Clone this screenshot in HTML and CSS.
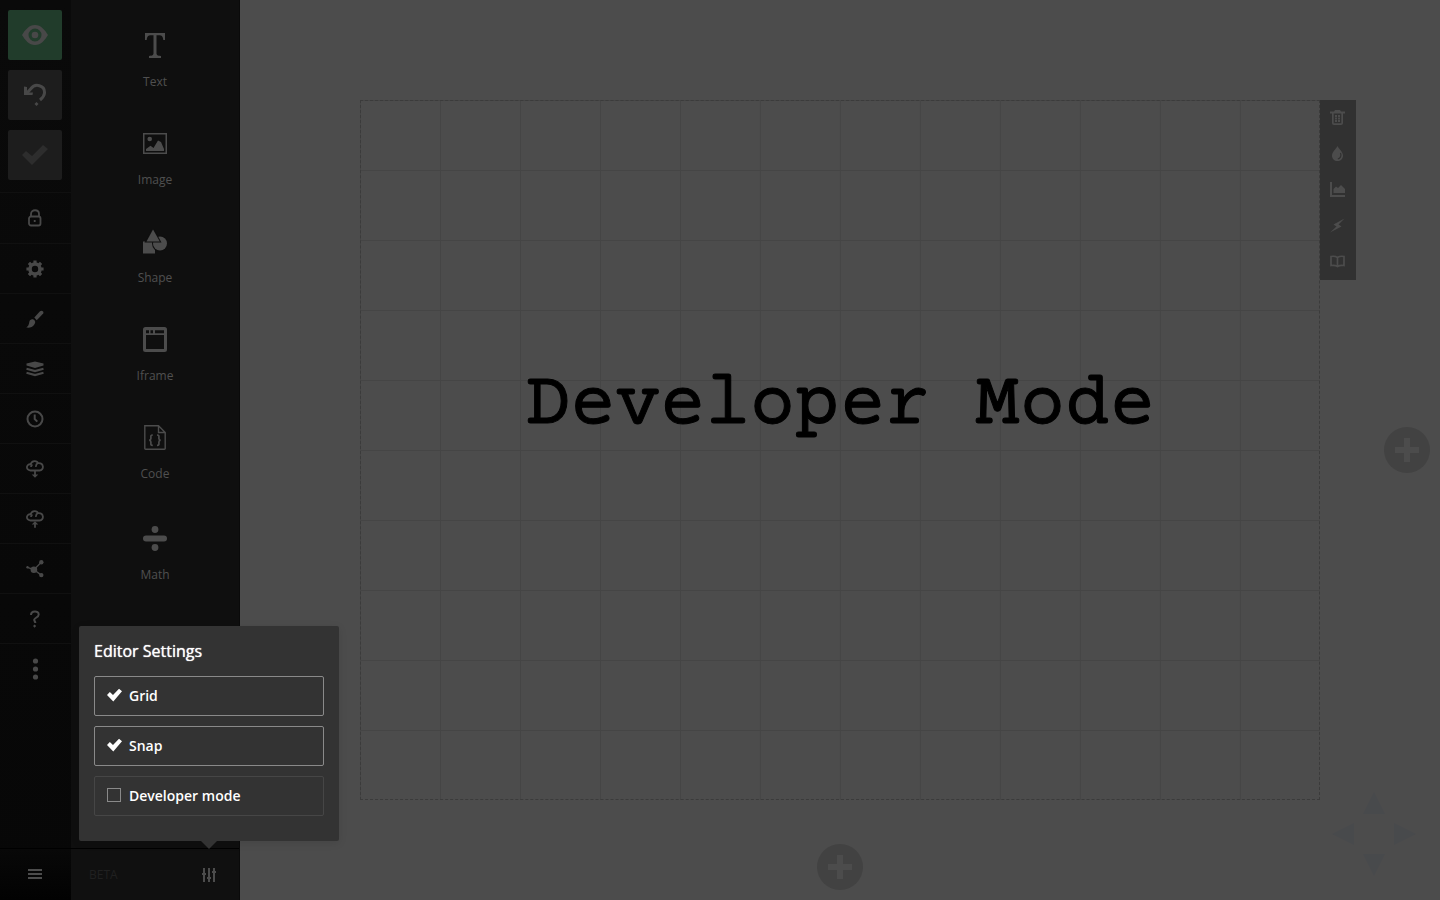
FILE: index.html
```html
<!DOCTYPE html>
<html lang="en">
<head>
<meta charset="utf-8">
<title>Slide editor</title>
<link rel="stylesheet" href="styles.css">
</head>
<body>
<div class="app">
  <nav class="rail" aria-label="Main">
    <div class="rail-actions">
      <button class="action action-preview" aria-label="Preview"><svg width="28" height="20" viewBox="0 0 28 20"><path fill-rule="evenodd" fill="currentColor" d="M1 10C4 5 8 0 14 0s10 5 13 10c-3 5-7 10-13 10S4 15 1 10zM14 3.500a6.500 6.500 0 1 0 0 13 6.500 6.500 0 0 0 0-13z"/><circle cx="14" cy="10" r="3.300" fill="currentColor"/></svg></button>
      <button class="action" aria-label="Undo"><svg width="24" height="24" viewBox="0 0 24 24"><path d="M4 10l4-4.500C12 0 22 2 21.500 10c-.2 3-2 5-4.500 7" fill="none" stroke="currentColor" stroke-width="3"/><path d="M1 3.500l3 .5v5.500h6l-.5 2.500H1z" fill="currentColor"/><path d="M13.500 19l2 2-2 2-2-2z" fill="currentColor"/></svg></button>
      <button class="action action-off" aria-label="Save"><svg width="26" height="22" viewBox="0 0 26 22"><path d="M0 11l4-4 6 5L21 1l5 4-16 16z" fill="currentColor"/></svg></button>
    </div>
    <ul class="rail-list">
      <li><button aria-label="Privacy"><svg width="18" height="18" viewBox="0 0 18 18" fill="none" stroke="currentColor" stroke-width="1.800"><rect x="3" y="7.500" width="11.500" height="9" rx="2"/><path d="M5 7V5c0-5 8-5 8 0v3"/><path d="M8.700 11v2"/></svg></button></li>
      <li><button aria-label="Settings"><svg width="18" height="18" viewBox="0 0 18 18"><circle cx="9" cy="9" r="5" fill="none" stroke="currentColor" stroke-width="3.600"/><g stroke="currentColor" stroke-width="3.200"><path d="M9 .4v3M9 14.600v3M.4 9h3M14.600 9h3M2.900 2.900L5 5M13 13l2.100 2.100M2.900 15.100L5 13M13 5l2.100-2.100"/></g></svg></button></li>
      <li><button aria-label="Style"><svg width="18" height="18" viewBox="0 0 18 18" fill="currentColor"><path d="M8.300 7.600L14 1.200c1.400-1.400 4.300 0 3.200 2.200l-6.500 6.800z"/><path d="M3.300 12c.3-2.500 2.500-3.300 4.200-2.500 2 1 2.300 3 .8 5C6.500 17.500 3.300 18 .3 17.500c1.700-1 2.700-2.800 3-5.500z"/></svg></button></li>
      <li><button aria-label="Arrange"><svg width="18" height="18" viewBox="0 0 18 18"><path d="M9 1.500l8.500 2v2L9 8 .5 5.500v-2z" fill="currentColor"/><path d="M.5 8.700L9 11l8.500-2.300M.5 12.700L9 15l8.500-2.300" fill="none" stroke="currentColor" stroke-width="2.200"/></svg></button></li>
      <li><button aria-label="History"><svg width="18" height="18" viewBox="0 0 18 18" fill="none" stroke="currentColor" stroke-width="2"><circle cx="9" cy="9" r="7.500"/><path d="M8.700 4.500V9l2.600 2.600"/></svg></button></li>
      <li><button aria-label="Import"><svg width="18" height="18" viewBox="0 0 18 18"><path d="M4.500 10.500C-1 10 .5 3.500 4.600 4.300 6 .2 11 .2 12 3.200c6-.6 6.500 7 1.500 7.300zM5 7c0-1 .6-1.800 1.500-2M10 6.800c-.2-1.800.5-3 2-3.600" fill="none" stroke="currentColor" stroke-width="1.800"/><path d="M8.100 11h1.800v3.500h2.400L9 17.800l-3.300-3.300h2.400z" fill="currentColor"/></svg></button></li>
      <li><button aria-label="Export"><svg width="18" height="18" viewBox="0 0 18 18"><path d="M4.500 10.500C-1 10 .5 3.500 4.600 4.300 6 .2 11 .2 12 3.200c6-.6 6.500 7 1.500 7.300zM5 7c0-1 .6-1.800 1.500-2M10 6.800c-.2-1.800.5-3 2-3.600" fill="none" stroke="currentColor" stroke-width="1.800"/><path d="M8.100 17.800h1.800v-3.200h2.400L9 11.300l-3.300 3.300h2.400z" fill="currentColor"/></svg></button></li>
      <li><button aria-label="Share"><svg width="18" height="18" viewBox="0 0 18 18"><g fill="currentColor"><circle cx="7.900" cy="9.700" r="3.300"/><circle cx="15.300" cy="2.300" r="2.200"/><circle cx="15.300" cy="15.100" r="2.200"/><circle cx="1.500" cy="7.300" r="1.200"/></g><path d="M1.500 7.300l6.400 2.400 7.400-7.400M8 9.700l7.300 5.400" fill="none" stroke="currentColor" stroke-width="1.400"/></svg></button></li>
      <li><button aria-label="Help"><svg width="18" height="18" viewBox="0 0 18 18"><path d="M5 5c0-4.500 7.700-4.600 7.700-.6 0 3.400-5.400 3.400-4.400 6 .3.800 1 1.300 1 2.500" fill="none" stroke="currentColor" stroke-width="2"/><path d="M8.600 14.500l1.600 1.600-1.600 1.600L7 16.100z" fill="currentColor"/></svg></button></li>
      <li><button aria-label="More"><svg width="18" height="22" viewBox="0 0 18 22" fill="currentColor"><circle cx="9.500" cy="3" r="2.600"/><circle cx="9.500" cy="11" r="2.600"/><circle cx="9.500" cy="19" r="2.600"/></svg></button></li>
    </ul>
    <button class="rail-menu" aria-label="Menu"><svg width="14" height="10" viewBox="0 0 14 10" fill="currentColor"><path d="M0 0h14v2H0zM0 4h14v2H0zM0 8h14v2H0z"/></svg></button>
  </nav>

  <aside class="panel">
    <div class="blocks">
      <button class="block"><svg width="24" height="25" viewBox="0 0 24 25"><path d="M2 0h20v7h-1.700C20 3.500 18.800 2.200 16 2.200h-2.500V20c0 2 1 2.700 4.500 3V25H6v-2c3.500-.3 4.500-1 4.500-3V2.200H8C5.200 2.200 4 3.500 3.700 7H2z" fill="currentColor"/></svg>Text</button>
      <button class="block"><svg width="24" height="25" viewBox="0 0 24 25"><rect x=".75" y="2.750" width="22.500" height="19.500" fill="none" stroke="currentColor" stroke-width="1.500"/><circle cx="6.700" cy="8" r="2.300" fill="currentColor"/><path d="M3 20v-2l4.500-3.300 3 2.300L15 9.500l3 1.500 3 7v2z" fill="currentColor"/></svg>Image</button>
      <button class="block"><svg width="24" height="25" viewBox="0 0 24 25"><rect y="12.500" width="12" height="12" fill="currentColor"/><circle cx="17" cy="14.500" r="8" fill="#0f0f0f"/><circle cx="17" cy="14.500" r="7" fill="currentColor"/><path d="M10-1.800l8.500 15.200h-17z" fill="#0f0f0f"/><path d="M10 .5l6.800 12H3.500z" fill="currentColor"/></svg>Shape</button>
      <button class="block"><svg width="24" height="25" viewBox="0 0 24 25"><path fill-rule="evenodd" fill="currentColor" d="M2.500 0h19A2.500 2.500 0 0 1 24 2.500v20a2.500 2.500 0 0 1-2.500 2.500h-19A2.500 2.500 0 0 1 0 22.500v-20A2.500 2.500 0 0 1 2.500 0zM3 3.300v3h3v-3zM7.500 3.300v3h2.500v-3zM12 3.300v3h9v-3zM3 8v14h18V8z"/></svg>Iframe</button>
      <button class="block"><svg width="24" height="25" viewBox="0 0 24 25" fill="none" stroke="currentColor" stroke-width="1.400"><path d="M2 .8h13.500l6.700 6.700v16a.8.8 0 0 1-.8.800H2.600a.8.800 0 0 1-.8-.8V.8zM15.500.8v6.700h6.700"/><path d="M9.800 10c-3 0-1.500 2-2 4-.1.800-.7 1.200-1.700 1.200 1 0 1.600.4 1.700 1.200.5 2-1 4 2 4M14 10c3 0 1.500 2 2 4 .1.800.7 1.200 1.700 1.200-1 0-1.600.4-1.700 1.200-.5 2 1 4-2 4" stroke-width="1.700"/></svg>Code</button>
      <button class="block"><svg width="24" height="28" viewBox="0 -3 24 28" fill="currentColor"><circle cx="12" cy="3.500" r="3.400"/><rect y="9.500" width="24" height="6" rx="3"/><circle cx="12" cy="21.500" r="3.400"/></svg>Math</button>
    </div>
    <footer class="panel-foot">
      <span>BETA</span>
      <button class="tune" aria-label="Editor settings"><svg width="14" height="14" viewBox="0 0 14 14" fill="currentColor"><path d="M1 0h2v14H1zM6 0h2v14H6zM11 0h2v14h-2zM0 5h4v2H0zM5 9h4v2H5zM10 3h4v2h-4z"/></svg></button>
      <section class="popover" aria-labelledby="popover-title">
        <h2 id="popover-title">Editor Settings</h2>
        <label class="option"><input type="checkbox" checked>Grid</label>
        <label class="option"><input type="checkbox" checked>Snap</label>
        <label class="option"><input type="checkbox">Developer mode</label>
      </section>
    </footer>
  </aside>

  <main class="stage">
    <section class="slide"><h1>Developer Mode</h1></section>
    <div class="side">
      <div class="slide-tools">
        <button aria-label="Delete slide"><svg width="15" height="15" viewBox="0 0 15 15"><path fill-rule="evenodd" fill="currentColor" d="M0 1.500h4L5 0h5l1 1.500h4V3.500h-2v9.500c0 1.300-.7 2-2 2H4c-1.300 0-2-.7-2-2V3.500H0zM3.700 3.500v9.700h7.600V3.500z"/><path fill="currentColor" d="M5 5h2v2H5zM8 5h2v2H8zM5 7.600h2v1.800H5zM8 7.600h2v1.800H8zM5 10h2v2H5zM8 10h2v2H8z"/></svg></button>
        <button aria-label="Background color"><svg width="15" height="15" viewBox="0 0 15 15"><path d="M7.500 0C9 3 13 6 13 9.700c0 3-2.400 5.300-5.500 5.300S2 12.700 2 9.700C2 6 6 3 7.500 0z" fill="currentColor"/><path d="M10.500 7c1.200 3-.2 5.300-2.700 6" fill="none" stroke="#313131" stroke-width="1.200"/></svg></button>
        <button aria-label="Background image"><svg width="15" height="15" viewBox="0 0 15 15" fill="currentColor"><path d="M0 0h2v13h13v2H0z"/><path d="M3.500 11V7L6 4.500l2 1.500L11 3l4 4v4z"/></svg></button>
        <button aria-label="Fragments"><svg width="15" height="15" viewBox="0 0 15 15"><path d="M14.500.5L3.500 6.500l3 2L0 14.500l11.500-6-3-2z" fill="currentColor"/></svg></button>
        <button aria-label="Speaker notes"><svg width="15" height="15" viewBox="0 0 15 15" fill="none" stroke="currentColor" stroke-width="1.700"><path d="M1 2.500c2.500-.5 5 0 6.500 1 1.500-1 4-1.500 6.500-1v9c-2.500-.4-5 0-6.500 1-1.500-1-4-1.400-6.500-1zM7.500 3.500v9"/></svg></button>
      </div>
      <button class="add" aria-label="Add slide to the right"><svg width="24" height="24" viewBox="0 0 24 24" fill="currentColor"><path d="M9 0h6v9h9v6h-9v9H9v-9H0V9h9z"/></svg></button>
    </div>
    <div class="below">
      <button class="add" aria-label="Add slide below"><svg width="24" height="24" viewBox="0 0 24 24" fill="currentColor"><path d="M9 0h6v9h9v6h-9v9H9v-9H0V9h9z"/></svg></button>
    </div>
    <svg class="arrows" width="84" height="84" viewBox="0 0 84 84" fill="currentColor" aria-hidden="true"><path d="M42 0l11 22H31zM42 84l11-22H31zM0 42l22-11v22zM84 42L62 31v22z"/></svg>
  </main>
</div>
</body>
</html>
```
FILE: styles.css
```css
* { box-sizing: border-box; }

body {
  margin: 0;
  background: #4c4c4c;
  color: #505050;
  font-family: "Open Sans", "Noto Sans", sans-serif;
  font-size: 12px;
}

button {
  display: flex;
  align-items: center;
  justify-content: center;
  margin: 0;
  padding: 0;
  border: 0;
  background: none;
  color: inherit;
  font: inherit;
}

svg { display: block; flex: none; }

.app {
  display: grid;
  grid-template-columns: 71px 169px 1fr;
  min-height: 100vh;
}

/* Icon rail */
.rail {
  display: flex;
  flex-direction: column;
  background: linear-gradient(#0a0a0a, #070707);
  color: #484848;
}

.rail-actions {
  display: flex;
  flex-direction: column;
  gap: 10px;
  padding: 10px 9px 12px 8px;
}

.action {
  height: 50px;
  border-radius: 2px;
  background: #1d1d1d;
}

.action-preview { background: #213c2b; }
.action-off { color: #2d2d2d; }

.rail-list {
  margin: 0;
  padding: 0;
  border-top: 1px solid #101010;
  list-style: none;
}

.rail-list button {
  width: 70px;
  height: 50px;
}

.rail-list li + li { border-top: 1px solid #101010; }
.rail-list li + li button { height: 49px; }

.rail-menu {
  height: 52px;
  margin-top: auto;
  padding: 0 1px 2px 0;
  border-top: 1px solid #000;
  background: linear-gradient(#080808, #020202);
  color: #4c4c4c;
}

/* Block panel */
.panel {
  display: flex;
  flex-direction: column;
  border-right: 1px solid #0a0a0a;
  background: #0f0f0f;
}

.blocks {
  display: flex;
  flex-direction: column;
  gap: 40px;
  padding-top: 33px;
}

.block {
  flex-direction: column;
  gap: 15px;
  line-height: 18px;
}

.block svg { color: #4c4c4c; }

.panel-foot {
  position: relative;
  display: flex;
  align-items: center;
  justify-content: space-between;
  height: 52px;
  margin-top: auto;
  padding: 0 23px 0 18px;
  border-top: 1px solid #000;
  background: #101010;
  color: #202020;
}

.tune { color: #4c4c4c; }

/* Settings popover */
.popover {
  position: absolute;
  bottom: 59px;
  left: 8px;
  z-index: 2;
  display: flex;
  flex-direction: column;
  gap: 10px;
  width: 260px;
  padding: 10px 15px 25px;
  border-radius: 2px;
  background: #333;
  box-shadow: 0 2px 8px rgba(0, 0, 0, 0.1);
  color: #fff;
}

.popover::after {
  content: "";
  position: absolute;
  top: 100%;
  right: 122px;
  border: 8px solid transparent;
  border-top-color: #333;
  border-bottom: 0;
}

.popover h2 {
  margin: 0;
  font-size: 16px;
  font-weight: 500;
  line-height: 30px;
  text-shadow: 0 0 1px #fff;
}

.option {
  display: flex;
  align-items: center;
  gap: 7px;
  height: 40px;
  padding: 0 12px 2px;
  border: 1px solid #464646;
  border-radius: 2px;
  font-size: 14px;
  font-weight: 600;
}

.option:has(:checked) { border-color: #8a8a8a; }

.option input {
  width: 14px;
  height: 14px;
  margin: 0 1px 0 0;
  border: 1px solid #8a8a8a;
  appearance: none;
}

.option input:checked {
  width: 15px;
  margin: 0;
  border: 0;
  background: #fff;
  clip-path: polygon(0 50%, 19% 28%, 40% 50%, 80% 6%, 100% 24%, 42% 96%);
}

/* Canvas */
.stage {
  position: relative;
  display: grid;
  grid-template-rows: 1fr 7fr 1fr;
  grid-template-columns: 1fr 8fr 1fr;
}

.slide {
  display: grid;
  grid-row: 2;
  grid-column: 2;
  place-items: center;
  border: 1px dashed #3b3b3b;
  background-image:
    linear-gradient(90deg, #454545 1px, transparent 1px),
    linear-gradient(#454545 1px, transparent 1px);
  background-origin: border-box;
  background-size: calc(100% / 12) calc(100% / 10);
}

.slide h1 {
  margin: 0 0 86px;
  color: #000;
  font-family: "Courier Prime", "Courier 10 Pitch", "Liberation Mono", monospace;
  font-size: 75px;
  font-weight: 400;
  line-height: 90px;
  white-space: nowrap;
  -webkit-text-stroke: 1px #000;
}

.side {
  display: flex;
  grid-row: 2;
  grid-column: 3;
  align-items: center;
  justify-content: space-between;
  padding-right: 10px;
}

.slide-tools {
  align-self: flex-start;
  background: #313131;
  color: #4c4c4c;
}

.slide-tools button {
  width: 36px;
  height: 36px;
  padding: 0 1px 1px 0;
}

.add {
  width: 46px;
  height: 46px;
  border-radius: 50%;
  background: #424242;
  color: #4c4c4c;
}

.below {
  display: flex;
  grid-row: 3;
  grid-column: 2;
  align-items: flex-end;
  justify-content: center;
  padding-bottom: 10px;
}

.arrows {
  position: absolute;
  right: 24px;
  bottom: 24px;
  color: #484a4c;
}
```
